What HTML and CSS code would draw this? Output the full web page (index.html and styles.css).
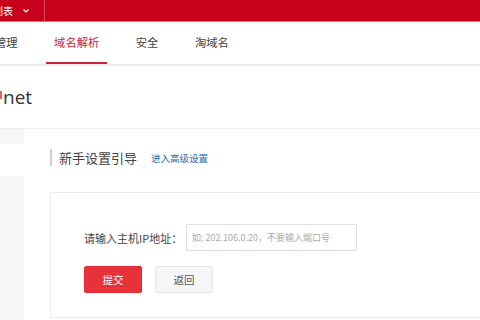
FILE: index.html
```html
<!DOCTYPE html>
<html lang="zh">
<head>
<meta charset="utf-8">
<link rel="stylesheet" href="styles.css">
</head>
<body>
<div class="topbar">
  <div class="menu">
    <span class="menu-text">列表</span>
    <svg class="chev" width="6" height="4" viewBox="0 0 6 4"><path d="M0.5 0.5 L3 3 L5.5 0.5" fill="none" stroke="#fff" stroke-width="1.2"/></svg>
  </div>
</div>
<nav class="nav">
  <a class="tab first">管理</a>
  <a class="tab active">域名解析</a>
  <a class="tab">安全</a>
  <a class="tab">淘域名</a>
</nav>
<header class="domain">
  <span class="dot"></span><span class="domain-name">net</span>
</header>
<div class="body">
  <aside class="side">
    <div class="side-block top"></div>
    <div class="side-gap"></div>
    <div class="side-block rest"></div>
  </aside>
  <main class="main">
    <div class="title-row">
      <h2 class="title">新手设置引导</h2>
      <a class="adv">进入高级设置</a>
    </div>
    <div class="box">
      <div class="form-row">
        <label class="label">请输入主机IP地址：</label>
        <div class="input">如: 202.106.0.20，不要输入端口号</div>
      </div>
      <div class="btn-row">
        <button class="btn primary">提交</button>
        <button class="btn plain">返回</button>
      </div>
    </div>
  </main>
</div>
</body>
</html>
```

FILE: styles.css
```css
html, body {
  margin: 0;
  padding: 0;
  background: #fff;
  width: 480px;
  height: 320px;
  overflow: hidden;
  font-family: "Noto Sans CJK SC", "Noto Sans", sans-serif;
  color: #333;
}
.topbar {
  height: 21px;
  background: #c7001b;
  border-bottom: 1px solid #e07080;
  display: flex;
  align-items: center;
}
.menu {
  width: 44px;
  height: 21px;
  border-right: 1px solid #d84a5a;
  display: flex;
  align-items: center;
  overflow: hidden;
}
.menu-text {
  color: #fff;
  font-size: 10px;
  margin-left: -7px;
  line-height: 21px;
}
.chev {
  margin-left: 10px;
}
.nav {
  height: 42px;
  display: flex;
  gap: 20.5px;
  border-bottom: 2px solid #ececec;
  margin-left: -7px;
}
.tab {
  padding: 0 8px;
  font-size: 11.3px;
  line-height: 40px;
  color: #444;
  border-bottom: 2px solid transparent;
}
.tab.first {
  margin-left: -6px;
}
.tab.active {
  color: #c9243a;
  border-bottom-color: #c9243a;
}
.domain {
  height: 62px;
  display: flex;
  align-items: center;
  border-bottom: 1px solid #efefef;
}
.dot {
  display: inline-block;
  width: 2px;
  height: 8px;
  background: #e86070;
  margin-top: -4px;
}
.domain-name {
  font-size: 19px;
  color: #333;
  margin-left: 1px;
  font-family: "Open Sans", "Noto Sans", sans-serif;
}
.body {
  display: flex;
}
.side {
  width: 24px;
  display: flex;
  flex-direction: column;
}
.side-block {
  background: #f6f6f6;
}
.side-block.top {
  height: 15px;
}
.side-gap {
  height: 32px;
}
.side-block.rest {
  height: 150px;
}
.main {
  flex: 1;
  padding-left: 26px;
}
.title-row {
  display: flex;
  align-items: center;
  margin-top: 20px;
  height: 17px;
  border-left: 2px solid #d0d0d0;
  padding-left: 7px;
}
.title {
  margin: 0;
  font-size: 13px;
  font-weight: normal;
  color: #444;
  line-height: 17px;
}
.adv {
  margin-left: 14px;
  font-size: 9.5px;
  color: #2b6cb0;
}
.box {
  margin-top: 26px;
  border: 1px solid #ececec;
  border-right: none;
  height: 124px;
  padding-left: 33px;
}
.form-row {
  display: flex;
  align-items: center;
  margin-top: 31px;
}
.label {
  font-size: 11px;
  color: #444;
  width: 102px;
}
.input {
  width: 164px;
  height: 25px;
  border: 1px solid #e0e0e0;
  font-size: 9px;
  color: #aaa;
  line-height: 25px;
  padding-left: 5px;
}
.btn-row {
  display: flex;
  gap: 13px;
  margin-top: 15px;
}
.btn {
  width: 58px;
  height: 27px;
  font-size: 10.5px;
  font-family: "Noto Sans CJK SC", sans-serif;
  border-radius: 2px;
  padding: 0;
}
.btn.primary {
  background: #e8323a;
  color: #fff;
  border: 1px solid #e02c34;
}
.btn.plain {
  background: #f6f6f6;
  color: #555;
  border: 1px solid #e8e8e8;
}
```
